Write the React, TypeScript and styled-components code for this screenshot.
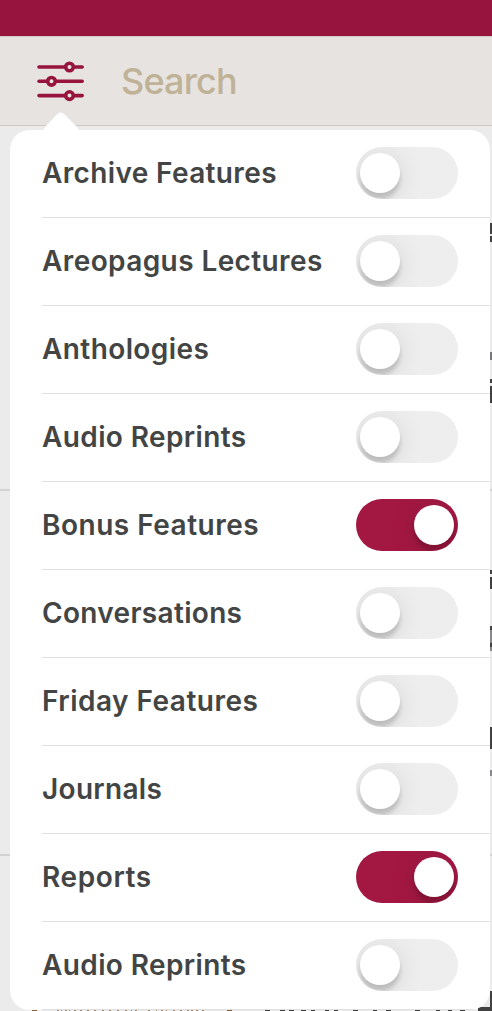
import React from "react";
import styled, { createGlobalStyle } from "styled-components";

const GlobalStyle = createGlobalStyle`
  * { box-sizing: border-box; }
  body { margin: 0; background: #ebebeb; font-family: Inter, "Liberation Sans", sans-serif; }
`;

const Page = styled.div`
  position: relative;
  display: flex;
  flex-direction: column;
  width: 492px;
  height: 1011px;
  overflow: hidden;
  background: #ebebeb;
`;

const TopBar = styled.header`
  flex: none;
  height: 36px;
  background: #97143e;
`;

const SearchBar = styled.div`
  display: flex;
  flex: none;
  align-items: center;
  gap: 36px;
  height: 90px;
  padding-left: 37px;
  background: #e7e3e0;
  border-top: 1px solid #cfc9c8;
  border-bottom: 1px solid #cccac8;
`;

const FilterIcon = styled.svg`
  display: block;
  flex: none;
`;

const SearchLabel = styled.span`
  font-size: 36px;
  font-weight: 550;
  letter-spacing: -0.85px;
  line-height: 44px;
  color: #bfb297;
`;

const Feed = styled.main`
  display: flex;
  flex: 1;
  flex-direction: column;
`;

const Article = styled.article`
  display: flex;
  flex: none;
  justify-content: flex-end;
  height: 365px;
  border-bottom: 2px solid #d3d3d3;
  &:last-child {
    flex: 1;
    align-items: flex-end;
    border-bottom: 0;
  }
`;

const Slivers = styled.svg`
  display: block;
  flex: none;
`;

const Menu = styled.div`
  position: absolute;
  left: 10px;
  top: 112px;
  display: flex;
  flex-direction: column;
  width: 480px;
`;

const Pointer = styled.svg`
  display: block;
  flex: none;
  margin: 0 0 -2px 33px;
`;

const List = styled.div`
  display: flex;
  flex-direction: column;
  padding-left: 32px;
  border-radius: 20px;
  overflow: hidden;
  background: #fff;
`;

const Row = styled.label`
  display: flex;
  align-items: center;
  justify-content: space-between;
  height: 88px;
  padding: 0 32px 1px 0;
  border-bottom: 1px solid #e0e0e0;
`;

const Label = styled.span<{ $spacing: number }>`
  font-size: 28px;
  font-weight: 600;
  line-height: 34px;
  letter-spacing: ${(p) => p.$spacing}px;
  white-space: nowrap;
  color: #434545;
`;

const Track = styled.span<{ $on?: boolean }>`
  display: flex;
  align-items: center;
  justify-content: ${(p) => (p.$on ? "flex-end" : "flex-start")};
  width: 102px;
  height: 52px;
  padding: 0 4px;
  border-radius: 26px;
  overflow: hidden;
  background: ${(p) => (p.$on ? "#a31843" : "#eeeeee")};
`;

const Knob = styled.span`
  width: 40px;
  height: 40px;
  border-radius: 50%;
  background: #fff;
  box-shadow: 0 6px 4px rgba(0, 0, 0, 0.16), 0 4px 28px rgba(0, 0, 0, 0.12);
`;

const items = [
  { name: "Archive Features", spacing: 0.36 },
  { name: "Areopagus Lectures", spacing: 0.4 },
  { name: "Anthologies", spacing: 0.4 },
  { name: "Audio Reprints", spacing: 0.38 },
  { name: "Bonus Features", spacing: 0.5, on: true },
  { name: "Conversations", spacing: 0.32 },
  { name: "Friday Features", spacing: 0.48 },
  { name: "Journals", spacing: 0.3 },
  { name: "Reports", spacing: 0.6, on: true },
  { name: "Audio Reprints", spacing: 0.38 },
];

export default function App() {
  return (
    <Page>
      <GlobalStyle />
      <TopBar />
      <SearchBar>
        <FilterIcon width="48" height="42" viewBox="0 0 48 42" fill="none" stroke="#97143e" strokeWidth="3.6" strokeLinecap="round">
          <path d="M2 7H28M37 7H45.2M2 21.3H10M19 21.3H45.2M2 35.6H28M37 35.6H45.2" />
          <circle cx="32.5" cy="7" r="3.8" />
          <circle cx="14.5" cy="21.3" r="3.8" />
          <circle cx="32.5" cy="35.6" r="3.8" />
        </FilterIcon>
        <SearchLabel>Search</SearchLabel>
      </SearchBar>

      {/* the articles lie under the menu; only the edges of their text show */}
      <Feed>
        <Article>
          <Slivers width="2" height="363" stroke="#414142" strokeWidth="2">
            <path d="M1 97V108M1 110V116M1 253V257M1 260V277" />
            <path d="M1 226V234" stroke="#77777a" />
          </Slivers>
        </Article>
        <Article>
          <Slivers width="2" height="363" stroke="#414142" strokeWidth="2">
            <path d="M1 79V83M1 86V98M1 135V139M1 152V156M1 236V258" />
            <path d="M1 139V152M1 156V160M1 279V285" stroke="#88888a" />
          </Slivers>
        </Article>
        <Article>
          <Slivers width="492" height="20" fill="none">
            <path d="M491 0V20" stroke="#414142" strokeWidth="2" />
            <path d="M478 18H492" stroke="#414142" strokeWidth="4" />
            <path d="M265 19.5h5M280 19.5h5M289 19.5h5M301 19.5h5M311 19.5h4M325 19.5h4M334 19.5h4M353 19.5h5M373 19.5h4M386 19.5h5M415 19.5h5M436 19.5h4M448 19.5h4M460 19.5h5" stroke="#414142" />
            <path d="M32 19.5h5M227 19.5h5" stroke="#8a5a30" />
            <path d="M57 19.5h2M61 19.5h1M65 19.5h2M69 19.5h1M74 19.5h2M80 19.5h2M87 19.5h2M94 19.5h2M102 19.5h2M109 19.5h2M117 19.5h2M125 19.5h2M131 19.5h1M135 19.5h2M148 19.5h2M156 19.5h1M161 19.5h2M166 19.5h1M173 19.5h2M180 19.5h2M187 19.5h2M191 19.5h2M196 19.5h2M202 19.5h2" stroke="#a98565" />
          </Slivers>
        </Article>
      </Feed>

      <Menu>
        <Pointer width="36" height="20" viewBox="0 0 36 20">
          <path d="M1 20V17Q1 16 2.5 14.5L13.8 2.6Q17.8 -1.4 21.8 2.6L33.5 14.5Q35.3 16.3 35.3 18V20Z" fill="#fff" />
        </Pointer>
        <List>
          {items.map((item, i) => (
            <Row key={i}>
              <Label $spacing={item.spacing}>{item.name}</Label>
              <Track $on={item.on}>
                <Knob />
              </Track>
            </Row>
          ))}
        </List>
      </Menu>
    </Page>
  );
}
